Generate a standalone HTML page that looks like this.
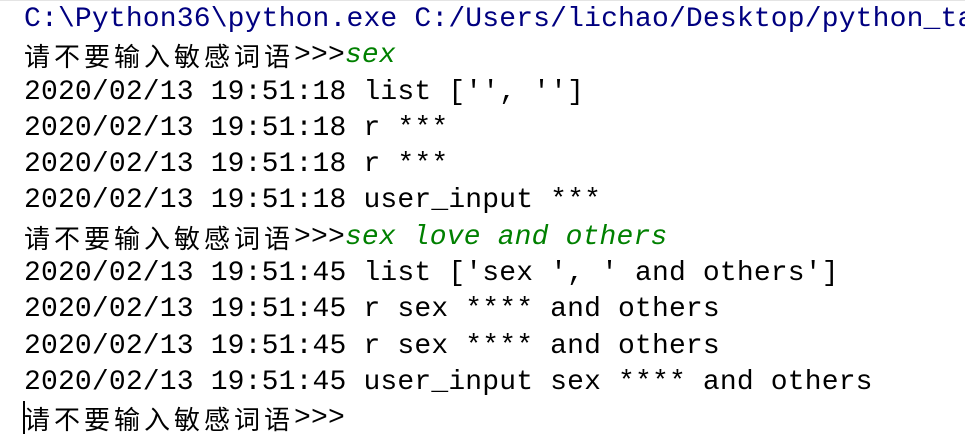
<!DOCTYPE html>
<html><head><meta charset="utf-8"><style>
html,body{margin:0;padding:0;background:#fff;width:965px;height:434px;overflow:hidden}
body{border-top:1px solid #e4e4e4;box-sizing:border-box;position:relative}
.c{position:absolute;left:24px;top:1px;width:941px;overflow:hidden;font-family:"Liberation Mono",monospace;font-size:28px;letter-spacing:0.17px;color:#000}
.c div{height:36.3px;line-height:36.3px;white-space:pre;overflow:hidden}
.b{color:#000080}
.g{color:#008000;font-style:italic}
.z{font-family:"Noto Sans CJK SC",sans-serif;font-size:26px;letter-spacing:4px;line-height:36px;vertical-align:top}
.cur{position:absolute;left:23px;top:400px;width:2px;height:34px;background:#000}
</style></head><body>
<div class="c">
<div class="b">C:\Python36\python.exe C:/Users/lichao/Desktop/python_task</div>
<div><span class="z">请不要输入敏感词语</span>&gt;&gt;&gt;<span class="g">sex</span></div>
<div>2020/02/13 19:51:18 list ['', '']</div>
<div>2020/02/13 19:51:18 r ***</div>
<div>2020/02/13 19:51:18 r ***</div>
<div>2020/02/13 19:51:18 user_input ***</div>
<div><span class="z">请不要输入敏感词语</span>&gt;&gt;&gt;<span class="g">sex love and others</span></div>
<div>2020/02/13 19:51:45 list ['sex ', ' and others']</div>
<div>2020/02/13 19:51:45 r sex **** and others</div>
<div>2020/02/13 19:51:45 r sex **** and others</div>
<div>2020/02/13 19:51:45 user_input sex **** and others</div>
<div><span class="z">请不要输入敏感词语</span>&gt;&gt;&gt;</div>
</div>
<div class="cur"></div>
</body></html>
